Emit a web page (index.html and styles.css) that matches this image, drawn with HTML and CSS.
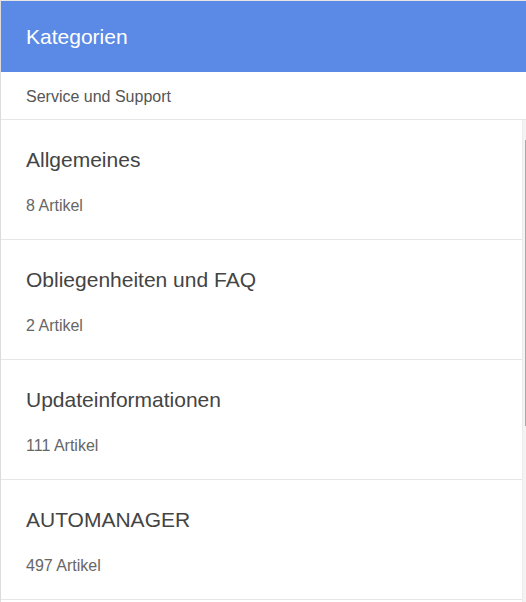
FILE: index.html
```html
<!DOCTYPE html>
<html>
<head lang="de">
    <meta charset="UTF-8">
    <title>Kategorien</title>
    <link rel="stylesheet" href="styles.css">
</head>
<body>
<!--Kategorien-Panel-->
<div class="panel">
    <div class="panel_h">Kategorien</div>
    <div class="panel_sub">Service und Support</div>
    <div class="panel_body">
        <div class="cat_list">
            <div class="cat">
                <div class="cat_name">Allgemeines</div>
                <div class="cat_count">8 Artikel</div>
            </div>
            <div class="cat">
                <div class="cat_name">Obliegenheiten und FAQ</div>
                <div class="cat_count">2 Artikel</div>
            </div>
            <div class="cat">
                <div class="cat_name">Updateinformationen</div>
                <div class="cat_count">111 Artikel</div>
            </div>
            <div class="cat">
                <div class="cat_name">AUTOMANAGER</div>
                <div class="cat_count">497 Artikel</div>
            </div>
        </div>
        <!--Scrollleiste-->
        <div class="rail">
            <div class="thumb"></div>
        </div>
    </div>
</div>
</body>
</html>
```

FILE: styles.css
```css
html, body {
    margin: 0;
    padding: 0;
    height: 100%;
    background: #ffffff;
}
body {
    font-family: "Liberation Sans", Arial, sans-serif;
    overflow: hidden;
}
.panel {
    height: 602px;
    box-sizing: border-box;
    border-top: 1px solid #e6e6e6;
    border-left: 1px solid #dcdcdc;
    display: flex;
    flex-direction: column;
}
.panel_h {
    background-color: #5b8ae6;
    color: #ffffff;
    font-size: 21px;
    line-height: 24px;
    padding: 24px 25px 23px;
}
.panel_sub {
    font-size: 16px;
    line-height: 20px;
    color: #555555;
    padding: 15px 25px 12px;
    border-bottom: 1px solid #e6e6e6;
}
.panel_body {
    flex: 1;
    display: flex;
    min-height: 0;
}
.cat_list {
    flex: 1;
    overflow: hidden;
}
.cat {
    padding: 28px 25px 23px;
    border-bottom: 1px solid #e6e6e6;
}
.cat + .cat {
    padding-top: 29px;
    padding-bottom: 23px;
    margin-top: -1px;
}
.cat_name {
    font-size: 21px;
    line-height: 24px;
    color: #444444;
}
.cat_count {
    margin-top: 24px;
    font-size: 16px;
    line-height: 20px;
    color: #666666;
}
.rail {
    width: 3px;
    border-left: 1px solid #ebebeb;
    background: #f3f3f3;
    display: flex;
    flex-direction: column;
}
.thumb {
    width: 1px;
    height: 286px;
    margin-top: 20px;
    margin-left: auto;
    background: #a9a9a9;
}
```
